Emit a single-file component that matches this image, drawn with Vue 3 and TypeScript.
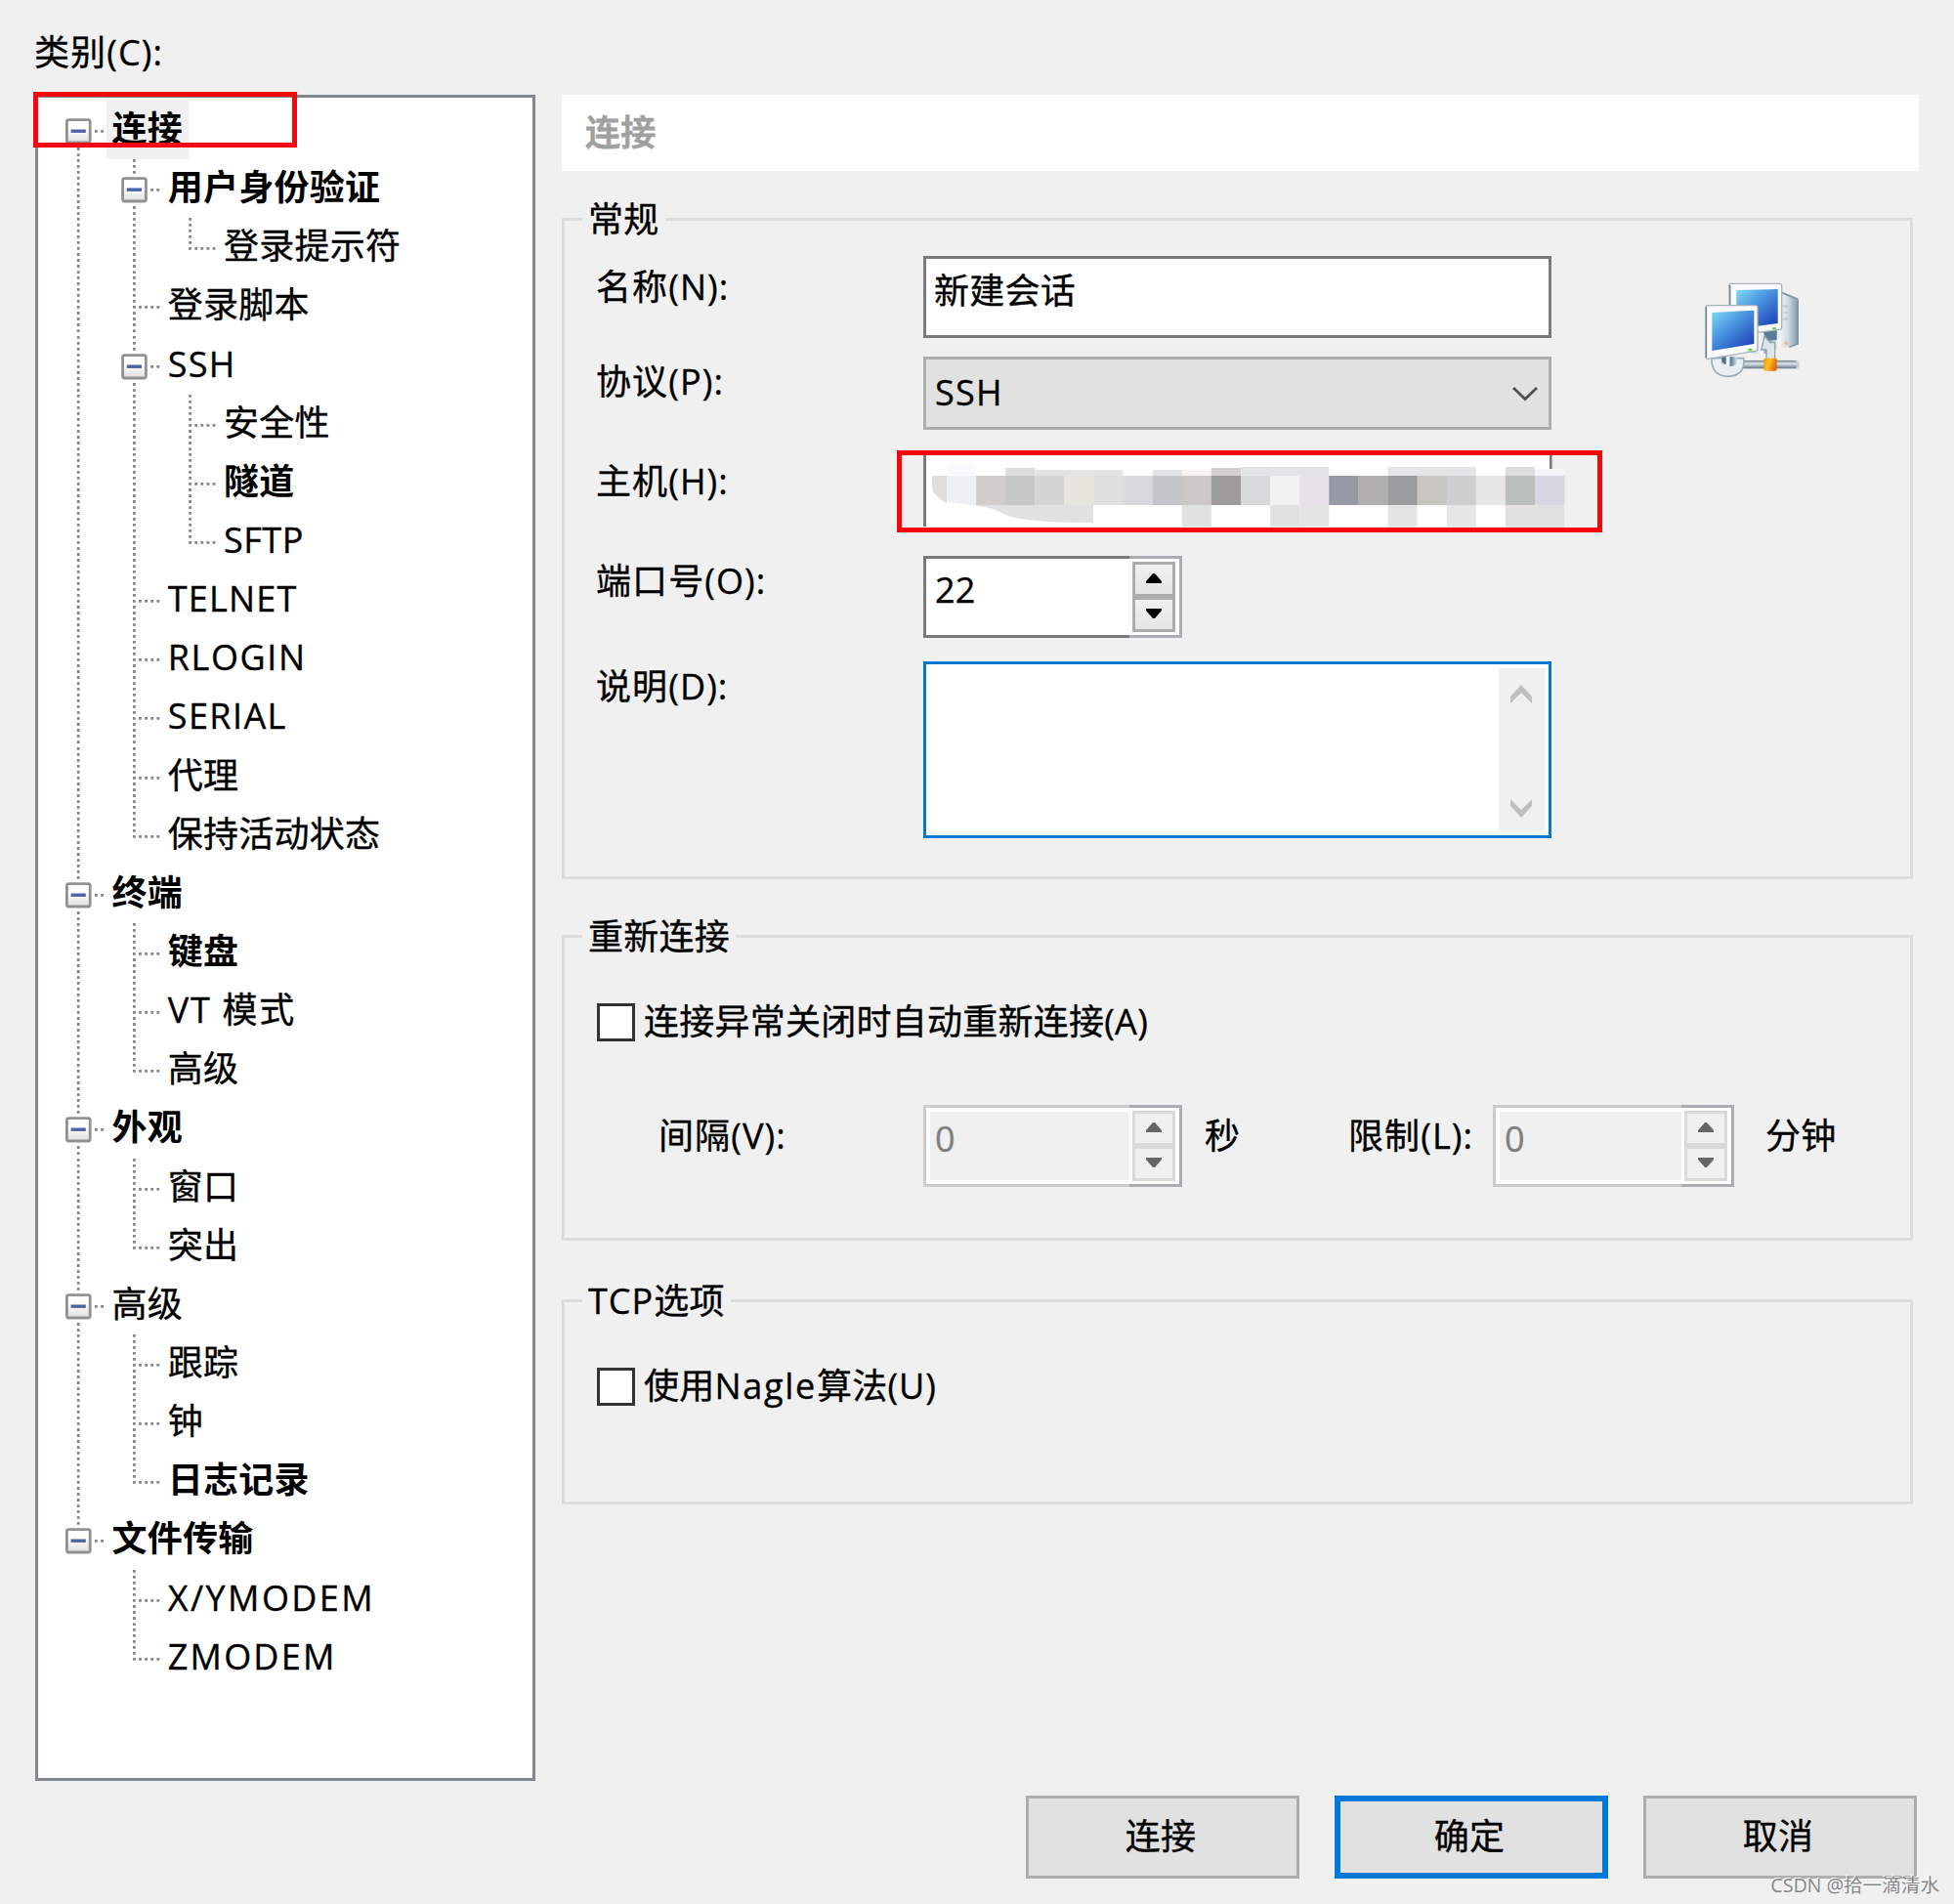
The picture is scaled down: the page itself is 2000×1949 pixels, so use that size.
<script setup lang="ts">
interface Row {
  text: string
  level: number
  bold?: boolean
  open?: boolean
  selected?: boolean
  spacing?: number
}

const items: Row[] = [
  { text: '连接', level: 0, bold: true, open: true, selected: true },
  { text: '用户身份验证', level: 1, bold: true, open: true },
  { text: '登录提示符', level: 2 },
  { text: '登录脚本', level: 1 },
  { text: 'SSH', level: 1, open: true, spacing: 1.3 },
  { text: '安全性', level: 2 },
  { text: '隧道', level: 2, bold: true },
  { text: 'SFTP', level: 2, spacing: 0.5 },
  { text: 'TELNET', level: 1, spacing: 1.2 },
  { text: 'RLOGIN', level: 1, spacing: 1.6 },
  { text: 'SERIAL', level: 1, spacing: 1.4 },
  { text: '代理', level: 1 },
  { text: '保持活动状态', level: 1 },
  { text: '终端', level: 0, bold: true, open: true },
  { text: '键盘', level: 1, bold: true },
  { text: 'VT 模式', level: 1, spacing: 1.7 },
  { text: '高级', level: 1 },
  { text: '外观', level: 0, bold: true, open: true },
  { text: '窗口', level: 1 },
  { text: '突出', level: 1 },
  { text: '高级', level: 0, open: true },
  { text: '跟踪', level: 1 },
  { text: '钟', level: 1 },
  { text: '日志记录', level: 1, bold: true },
  { text: '文件传输', level: 0, bold: true, open: true },
  { text: 'X/YMODEM', level: 1, spacing: 2.4 },
  { text: 'ZMODEM', level: 1, spacing: 2.2 },
]

const CELL = 57.2
const ROW = 60.15
const STEP = 6.015

// Does a later sibling exist at the given level under the same parent?
function continues(index: number, level: number): boolean {
  for (let i = index + 1; i < items.length; i++) {
    if (items[i].level < level) return false
    if (items[i].level === level) return true
  }
  return false
}

interface Seg { x: number; y1: number; y2: number }

function cx(level: number): number {
  return level * CELL + CELL / 2 + 0.6
}

function verticals(index: number): Seg[] {
  const row = items[index]
  const out: Seg[] = []
  for (let l = 0; l < row.level; l++) {
    if (continues(index, l)) out.push({ x: cx(l), y1: 0, y2: ROW })
  }
  const x = cx(row.level)
  const more = continues(index, row.level)
  if (row.open) {
    if (index > 0) out.push({ x, y1: 0, y2: STEP * 3 - 1 })
    if (more) out.push({ x, y1: STEP * 8, y2: ROW })
  } else {
    out.push({ x, y1: 0, y2: more ? ROW : STEP * 5 + 3 })
  }
  return out
}

const rows = items.map((r, i) => ({
  ...r,
  lines: verticals(i),
  width: CELL * (r.level + 1),
  mid: cx(r.level),
  gap: `${r.spacing ?? 0.25}px`,
}))

interface Block { x: number; y: number; w: number; h: number; c: string }

const bandColors = ['#edf0f4', '#d2cdca', '#c6c6c6', '#d3d4d4', '#e6e6df', '#dfdfdd', '#d9dadd', '#c6c4cb', '#cdc7c8', '#9d9b9c', '#d8d9db', '#f2f2f2', '#e7e2e7', '#959aa6', '#b1aeaf', '#9b9c9d', '#c7c6c1', '#cfcfd0', '#e7e7e7', '#bac0bd', '#d6d7e2']
const P = 30.1
const X0 = 24
const blocks: Block[] = bandColors.map((c, i) => ({ x: X0 + i * P, y: 22, w: P + 0.3, h: 30, c }))
const edge = (i: number, n: number, y: number, h: number, c: string): Block => ({ x: X0 + i * P, y, w: n * P, h, c })
blocks.push(
  edge(0, 1, 10, 12, '#f8fafd'),
  edge(2, 1, 14, 8, '#dcdcda'),
  edge(3, 3, 16, 6, '#e3e3e3'),
  edge(7, 1, 16, 6, '#e3e3e5'),
  edge(8, 1, 16, 6, '#f8f3f1'),
  edge(9, 1, 14, 8, '#d2d0d1'),
  edge(10, 3, 13, 9, '#e3e4e5'),
  edge(15, 3, 13, 9, '#e3e5e6'),
  edge(19, 1, 13, 9, '#dddddd'),
  edge(20, 1, 15, 7, '#f4f5f6'),
  edge(8, 1, 52, 22, '#e1e1e1'),
  edge(11, 1, 52, 22, '#e1e1e1'),
  edge(12, 1, 52, 22, '#e5e5e6'),
  edge(15, 1, 52, 28, '#e3e4e4'),
  edge(17, 1, 52, 28, '#e6e6e6'),
  edge(19, 2, 52, 28, '#e1e1e1'),
)

const spin = [
  { label: '间隔(V):', unit: '秒', cls: 'interval' },
  { label: '限制(L):', unit: '分钟', cls: 'limit' },
]
</script>

<template>
  <main class="dialog">
    <aside class="left">
      <div class="caption">类别(C):</div>
      <div class="tree">
        <div v-for="(r, i) in rows" :key="i" class="row">
          <svg class="guide" :width="r.width" height="60.15" :viewBox="`0 0 ${r.width} 60.15`">
            <line v-for="(s, k) in r.lines" :key="k" class="dots" :x1="s.x" :x2="s.x" :y1="s.y1" :y2="s.y2" />
            <line v-if="r.open" class="dots h" :x1="r.mid + 16.8" :x2="r.mid + 27" y1="31.4" y2="31.4" />
            <line v-else class="dots h" :x1="r.mid + 4.7" :x2="r.mid + 27" y1="31.4" y2="31.4" />
            <g v-if="r.open">
              <rect :x="r.mid - 11.8" y="19.6" width="23.8" height="23.4" rx="2" fill="url(#boxFill)" stroke="#919191" stroke-width="2.8" />
              <rect :x="r.mid - 7.6" y="29.5" width="15.2" height="3.4" fill="#4b64a8" />
            </g>
          </svg>
          <span class="node" :class="{ bold: r.bold, selected: r.selected }" :style="{ letterSpacing: r.gap }">{{ r.text }}</span>
        </div>
      </div>
    </aside>

    <section class="right">
      <header class="title">连接</header>

      <div class="group general">
        <div class="legend">常规</div>
        <div class="general-body">
          <div class="form">
            <div class="field name">
              <label>名称(N):</label>
              <div class="input">新建会话</div>
            </div>
            <div class="field protocol">
              <label>协议(P):</label>
              <div class="combo">
                <span>SSH</span>
                <svg width="28" height="18" viewBox="0 0 28 18"><path d="M2 3 L14 14.5 L26 3" fill="none" stroke="#505050" stroke-width="2.8" /></svg>
              </div>
            </div>
            <div class="field host">
              <label>主机(H):</label>
              <div class="host-input">
                <svg class="mosaic" width="680" height="84" viewBox="0 0 680 84">
                  <path d="M9 22 H24.5 V50 Q9 43 9 32 Z" fill="#dedede" />
                  <path d="M54 52 H174 V70 Q104 70 84 62 Q72 54 54 53 Z" fill="#e1e1e1" />
                  <rect v-for="(b, i) in blocks" :key="i" :x="b.x" :y="b.y" :width="b.w" :height="b.h" :fill="b.c" />
                  <path d="M24 48 Q38 52 54 52 H24 Z" fill="#fff" />
                  <rect x="641" y="0" width="2.6" height="15" fill="#7a7a7a" />
                </svg>
              </div>
            </div>
            <div class="field port">
              <label>端口号(O):</label>
              <div class="spinner">
                <div class="value">22</div>
                <div class="steps">
                  <i><svg width="16" height="10" viewBox="0 0 16 10"><path d="M7 0 H9 L16 8 V10 H0 V8 Z" /></svg></i>
                  <i><svg width="16" height="10" viewBox="0 0 16 10"><path d="M7 10 H9 L16 2 V0 H0 V2 Z" /></svg></i>
                </div>
              </div>
            </div>
            <div class="field desc">
              <label>说明(D):</label>
              <div class="area">
                <div class="scroll">
                  <svg width="22" height="19" viewBox="0 0 22 19"><path d="M0 12 L11 0 L22 12 V19 L11 8 L0 19 Z" fill="#bfbfbf" /></svg>
                  <svg width="22" height="19" viewBox="0 0 22 19"><path d="M0 7 L11 19 L22 7 V0 L11 11 L0 0 Z" fill="#bfbfbf" /></svg>
                </div>
              </div>
            </div>
          </div>

          <svg class="network" width="98" height="98" viewBox="72 85 294 294">
            <defs>
              <linearGradient id="boxFill" x1="0" y1="0" x2="0" y2="1">
                <stop offset="0.4" stop-color="#fff" /><stop offset="1" stop-color="#dedede" />
              </linearGradient>
              <linearGradient id="screen" x1="0" y1="0" x2="0.85" y2="1">
                <stop offset="0" stop-color="#7fdcf8" /><stop offset="0.45" stop-color="#4a94e0" /><stop offset="1" stop-color="#1b3fb4" />
              </linearGradient>
              <linearGradient id="tower" x1="0" y1="0" x2="1" y2="0">
                <stop offset="0" stop-color="#f4f8fa" /><stop offset="0.5" stop-color="#cfdbe2" /><stop offset="1" stop-color="#8099aa" />
              </linearGradient>
              <linearGradient id="pipe" x1="0" y1="0" x2="0" y2="1">
                <stop offset="0" stop-color="#6f8496" /><stop offset="0.4" stop-color="#dde6ec" /><stop offset="1" stop-color="#66798a" />
              </linearGradient>
              <linearGradient id="metal" x1="0" y1="0" x2="1" y2="0">
                <stop offset="0" stop-color="#b8c6d0" /><stop offset="0.45" stop-color="#fff" /><stop offset="0.6" stop-color="#5d7c96" /><stop offset="1" stop-color="#dfe6ea" />
              </linearGradient>
              <linearGradient id="plug" x1="0" y1="0" x2="1" y2="0.3">
                <stop offset="0" stop-color="#f58a0a" /><stop offset="0.45" stop-color="#ffc223" /><stop offset="1" stop-color="#e46a08" />
              </linearGradient>
            </defs>
            <path d="M304 118 L322 120 L361 138 V276 L328 284 L300 282 Z" fill="url(#tower)" />
            <path d="M361 138 V274 L334 284" fill="none" stroke="#7d93a3" stroke-width="4" />
            <path d="M312 117 L361 137" stroke="#8098a9" stroke-width="6" />
            <path d="M314 158 H332 M314 178 H332 M314 198 H332" stroke="#b9c7d0" stroke-width="5" />
            <rect x="320" y="267" width="10" height="9" fill="#f3ae98" />
            <path d="M216 292 Q250 282 256 236 L296 230 V290 Q252 316 216 300 Z" fill="url(#metal)" />
            <path d="M252 234 L296 229 V262 H268 Z" fill="#577b98" />
            <path d="M150 94 Q150 89 156 89 H304 Q311 89 311 95 V224 Q311 229 305 230 L156 250 Q150 250 150 244 Z" fill="#f8fafb" stroke="#a8b4bd" stroke-width="4" />
            <path d="M152 160 V94" stroke="#7f8d98" stroke-width="5" />
            <path d="M172 109 L299 106 V211 L172 228 Z" fill="url(#screen)" />
            <ellipse cx="288" cy="227" rx="6" ry="4" fill="#79d24d" />
            <path d="M190 338 H352" stroke="#5c6f80" stroke-width="28" stroke-linecap="round" opacity="0.25" />
            <path d="M190 325 H354 Q361 337 354 349 H190 Z" fill="url(#pipe)" />
            <path d="M258 250 L275 270 H290 V325 H264 V292 H248 Z" fill="#dce4e9" stroke="#91a4b1" stroke-width="4" />
            <path d="M96 318 H194 Q200 374 142 374 Q94 370 96 318 Z" fill="#e9eef1" stroke="#9badb9" stroke-width="5" />
            <path d="M126 314 H174 V336 Q150 350 126 336 Z" fill="url(#metal)" />
            <path d="M127 314 H140 V338 Q130 334 127 328 Z" fill="#46708f" />
            <path d="M78 160 Q78 156 84 156 H230 Q237 156 237 162 V288 Q237 295 230 296 L84 320 Q78 320 78 314 Z" fill="#fafbfc" stroke="#a5b1ba" stroke-width="4" />
            <path d="M79 160 V316" stroke="#7c8b97" stroke-width="5" />
            <path d="M97 178 L226 171 V274 L97 295 Z" fill="url(#screen)" />
            <ellipse cx="214" cy="292" rx="7" ry="4.5" fill="#79d24d" />
            <rect x="256" y="318" width="40" height="39" rx="4" fill="url(#plug)" />
          </svg>
        </div>
      </div>

      <div class="group reconnect">
        <div class="legend">重新连接</div>
        <div class="check"><b></b><span>连接异常关闭时自动重新连接(A)</span></div>
        <div class="timing">
          <div v-for="s in spin" :key="s.cls" class="timing-item" :class="s.cls">
            <label>{{ s.label }}</label>
            <div class="spinner disabled">
              <div class="value">0</div>
              <div class="steps">
                <i><svg width="16" height="10" viewBox="0 0 16 10"><path d="M7 0 H9 L16 8 V10 H0 V8 Z" /></svg></i>
                <i><svg width="16" height="10" viewBox="0 0 16 10"><path d="M7 10 H9 L16 2 V0 H0 V2 Z" /></svg></i>
              </div>
            </div>
            <span class="unit">{{ s.unit }}</span>
          </div>
        </div>
      </div>

      <div class="group tcp">
        <div class="legend"><span class="latin">TCP</span>选项</div>
        <div class="check"><b></b><span>使用<span class="wide">Nagle</span>算法<span class="latin">(U)</span></span></div>
      </div>

      <footer class="actions">
        <button>连接</button>
        <button class="primary">确定</button>
        <button>取消</button>
      </footer>
    </section>

    <div class="mark mark-tree"></div>
    <div class="mark mark-host"></div>
    <div class="watermark">CSDN @拾一滴清水</div>
  </main>
</template>

<style>
body { background: #f0f0f0; }
</style>

<style scoped>
.dialog {
  position: relative;
  box-sizing: border-box;
  width: 2000px;
  height: 1949px;
  display: flex;
  padding-left: 36px;
  background: #f0f0f0;
  color: #000;
  font: 36px/40px "Open Sans", "Noto Sans CJK SC", sans-serif;
  letter-spacing: 0.25px;
  -webkit-text-stroke: 0.35px currentColor;
  white-space: nowrap;
  overflow: hidden;
}
.dialog * { box-sizing: border-box; }
.left { width: 512px; padding-top: 34px; }
.caption { height: 40px; margin-left: -1px; letter-spacing: 1.1px; }
.tree {
  margin-top: 23px;
  height: 1726px;
  border: 3px solid #828790;
  background: #fff;
  padding: 3px 0 0 12.4px;
}
.row { display: flex; height: 60.15px; }
.guide { display: block; flex: none; }
.dots { stroke: #858585; stroke-width: 2.8; stroke-dasharray: 2.8 3.215; }
.dots.h { stroke-dasharray: 2.8 3.3; }
.node { height: 60px; line-height: 57px; padding: 0 6px; }
.node.bold { font-weight: 700; -webkit-text-stroke: 0; }
.node.selected { background: #f0f0f0; }

.right { width: 1389px; margin-left: 27px; padding-top: 97px; }
.title {
  height: 78px;
  padding-left: 24px;
  background: #fff;
  color: #a0a0a0;
  line-height: 77px;
  font-weight: 500;
  -webkit-text-stroke: 0.9px currentColor;
}
.group { width: 1383px; border: 3px solid #dcdcdc; }
.legend {
  width: fit-content;
  height: 40px;
  margin: -21px 0 0 18px;
  padding: 0 6px;
  background: #f0f0f0;
}
.latin { letter-spacing: 1px; }
.wide { letter-spacing: 1.7px; }
.general { height: 677px; margin-top: 48px; }
.general-body { display: flex; align-items: flex-start; padding: 17px 0 0 32px; }
.form { width: 978px; }
.field { display: flex; align-items: flex-start; }
.field label { width: 335px; flex: none; letter-spacing: 1.1px; }
.name { height: 103px; }
.name label { margin-top: 12px; }
.protocol { height: 95px; }
.protocol label { margin-top: 6px; }
.host { height: 109px; }
.host label { margin-top: 13px; }
.port { height: 108px; }
.port label { margin-top: 6px; }
.desc label { margin-top: 6px; }
.input {
  width: 643px;
  height: 84px;
  border: 3px solid #7a7a7a;
  background: #fff;
  padding: 13px 0 0 8px;
}
.combo {
  width: 643px;
  height: 75px;
  display: flex;
  align-items: center;
  justify-content: space-between;
  border: 3px solid #adadad;
  background: #e1e1e1;
  padding: 0 10px 0 9px;
  letter-spacing: 1.3px;
}
.combo span { margin-top: -2px; }
.host-input {
  width: 643px;
  height: 74px;
  margin-top: 5px;
  border-left: 3px solid #7a7a7a;
  background: #fff;
}
.mosaic { display: block; margin-left: -3px; }
.spinner {
  width: 265px;
  height: 84px;
  display: flex;
  background: #fff;
}
.value {
  flex: 1;
  border: 3px solid #7a7a7a;
  border-right: 0;
  padding: 12px 0 0 9px;
}
.steps {
  width: 54px;
  border: 3px solid #abadb3;
  border-left: 0;
  padding: 3px 4px 3px 3px;
  display: flex;
  flex-direction: column;
}
.steps i {
  flex: 1;
  display: flex;
  align-items: center;
  justify-content: center;
  border: 3px solid #acacac;
  background: linear-gradient(#f0f0f0, #e5e5e5);
}
.steps svg { margin-top: -2px; }
.area {
  width: 643px;
  height: 181px;
  border: 3px solid #0078d7;
  background: #fff;
  padding: 4px 3px;
  display: flex;
  justify-content: flex-end;
}
.scroll {
  width: 48px;
  background: #f0f0f0;
  display: flex;
  flex-direction: column;
  align-items: center;
  justify-content: space-between;
  padding: 17px 2px 14px 0;
}
.network { display: block; margin: 27px 0 0 156px; }

.reconnect { height: 313px; margin-top: 57px; }
.check { display: flex; align-items: center; height: 40px; margin: 47px 0 0 33px; }
.check b { width: 39px; height: 39px; border: 3px solid #333; background: #fff; margin-right: 9px; }
.timing { display: flex; margin: 65px 0 0 96px; }
.timing-item { display: flex; }
.timing-item label { letter-spacing: 1.1px; }
.timing-item label, .unit { margin-top: 12px; }
.interval label { width: 271px; }
.interval .unit { width: 147px; margin-left: 23px; }
.limit label { width: 148px; }
.limit .spinner { width: 247px; }
.limit .unit { margin-left: 32px; }
.disabled .value {
  border-color: #ccc;
  color: #808080;
  background: #f0f0f0;
  box-shadow: inset 4px 0 0 #fff, inset 0 4px 0 #fff, inset 0 -4px 0 #fff;
}
.disabled .steps i { border-color: #d9d9d9; background: #f0f0f0; }
.disabled svg { fill: #666; }

.tcp { height: 210px; margin-top: 60px; }
.actions { display: flex; justify-content: flex-end; gap: 36px; margin: 298px 2px 0 0; }
.actions button {
  width: 280px;
  height: 85px;
  padding: 0 4px 2px 0;
  border: 3px solid #adadad;
  background: #e1e1e1;
  color: #000;
  font: inherit;
  letter-spacing: 0.25px;
}
.actions .primary { border: 6px solid #0078d7; }

.mark { position: absolute; border: 5px solid #f4060f; }
.mark-tree { left: 34px; top: 94px; width: 270px; height: 57px; }
.mark-host { left: 918px; top: 461px; width: 722px; height: 84px; }
.watermark {
  position: absolute;
  right: 15px;
  top: 1916px;
  font-size: 19.6px;
  line-height: 28px;
  letter-spacing: 0;
  color: #858585;
  text-shadow: -1px -1px 0 #fff;
  -webkit-text-stroke: 0;
}
</style>
